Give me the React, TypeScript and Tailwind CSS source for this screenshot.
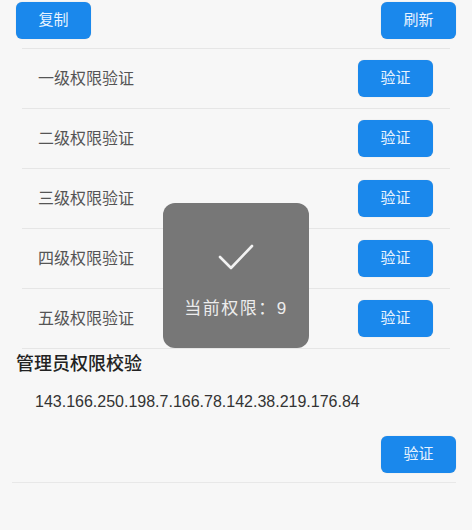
import React from "react";

const levels = ["一级权限验证", "二级权限验证", "三级权限验证", "四级权限验证", "五级权限验证"];

function BlueButton({ label }: { label: string }) {
  return (
    <button className="w-[75px] h-[37px] rounded-[6px] bg-[#1a88ec] text-[#e8f3ff] text-[15px] flex items-center justify-center shadow-[0_0_1px_rgba(0,0,0,0.2)]">
      {label}
    </button>
  );
}

export default function App() {
  return (
    <div
      className="relative w-[472px] h-[530px] bg-[#f7f7f7] overflow-hidden"
      style={{ fontFamily: '"Liberation Sans", "Noto Sans CJK SC", sans-serif' }}
    >
      <div className="flex justify-between px-4 pt-[2px] h-[48px]">
        <BlueButton label="复制" />
        <BlueButton label="刷新" />
      </div>

      <div className="mx-[22px] border-t border-[#e6e6e6]">
        {levels.map((name) => (
          <div
            key={name}
            className="h-[60px] border-b border-[#e6e6e6] flex items-center justify-between pl-4 pr-[17px]"
          >
            <span className="text-[16px] text-[#555]">{name}</span>
            <BlueButton label="验证" />
          </div>
        ))}
      </div>

      <div className="pl-4 h-[30px] flex items-center text-[18px] text-[#222] font-medium">
        管理员权限校验
      </div>
      <div className="pl-[35px] h-[46px] flex items-center text-[16px] text-[#333]">
        143.166.250.198.7.166.78.142.38.219.176.84
      </div>

      <div className="flex justify-end pt-[11px] pb-[9px] ml-[12px] mr-[16px] border-b border-[#e8e8e8]">
        <BlueButton label="验证" />
      </div>

      <div className="absolute left-[163px] top-[203px] w-[146px] h-[145px] rounded-[12px] bg-[#777777] flex flex-col items-center">
        <svg width="36" height="26" viewBox="0 0 36 26" className="mt-[41px]" fill="none">
          <path d="M2 13 L13 24 L34 2" stroke="#f2f2f2" strokeWidth="2.6" strokeLinecap="round" strokeLinejoin="round" />
        </svg>
        <div className="mt-[26px] text-[17px] text-[#ececec] tracking-[1.5px]">当前权限：9</div>
      </div>
    </div>
  );
}
